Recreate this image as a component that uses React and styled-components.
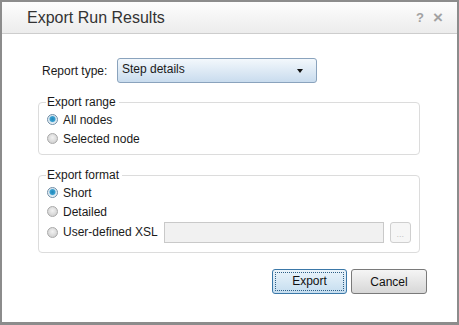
import React from "react";
import styled, { createGlobalStyle } from "styled-components";

const GlobalStyle = createGlobalStyle`
  html, body {
    margin: 0;
    padding: 0;
    background: #fff;
  }
  body {
    font-family: "Liberation Sans", Arial, sans-serif;
    font-size: 12px;
    color: #1a1a1a;
  }
`;

const Window = styled.div`
  width: 459px;
  height: 325px;
  box-sizing: border-box;
  border: 2px solid #8c8c8c;
  border-bottom-width: 3px;
  background: #fff;
  display: flex;
  flex-direction: column;
`;

const TitleBar = styled.div`
  height: 31px;
  flex: none;
  display: flex;
  align-items: center;
  padding: 0 14px 0 25px;
  border-bottom: 1px solid #cdcdcd;
  background: linear-gradient(#fdfdfd, #ececec);
`;

const Title = styled.div`
  flex: 1;
  font-size: 16px;
  color: #333;
  padding-top: 1px;
`;

const TitleButton = styled.span`
  color: #a2a2a2;
  font-size: ${(p) => (p.$big ? "17px" : "13px")};
  font-weight: bold;
  margin-left: ${(p) => (p.$big ? "9px" : "0")};
`;

const Body = styled.div`
  flex: 1;
  padding: 24px 37px 0 36px;
  display: flex;
  flex-direction: column;
`;

const FieldRow = styled.div`
  display: flex;
  align-items: center;
  padding-left: 4px;
  height: 25px;
`;

const Label = styled.span`
  width: 75px;
`;

const Select = styled.div`
  width: 200px;
  height: 25px;
  box-sizing: border-box;
  border: 1px solid #8aa3bd;
  border-radius: 3px;
  background: linear-gradient(#f3f8fc, #c9dcee);
  display: flex;
  align-items: center;
  justify-content: space-between;
  padding: 0 13px 3px 4px;
`;

const Arrow = styled.span`
  width: 0;
  height: 0;
  margin-top: 4px;
  border-left: 3.5px solid transparent;
  border-right: 3.5px solid transparent;
  border-top: 4px solid #111;
`;

const Group = styled.fieldset`
  margin: ${(p) => p.$top}px 0 0;
  padding: 1px 8px ${(p) => p.$bottom}px 8px;
  border: 1px solid #dcdcdc;
  border-radius: 4px;
  min-width: 0;
`;

const Legend = styled.legend`
  padding: 0 3px 0 1px;
  margin-left: -1px;
  line-height: 14px;
  color: #1a1a1a;
`;

const RadioRow = styled.label`
  display: flex;
  align-items: center;
  height: ${(p) => p.$h || 19}px;
  gap: 5px;
  white-space: nowrap;
`;

const RadioDot = styled.span`
  width: 11px;
  height: 11px;
  box-sizing: border-box;
  border-radius: 50%;
  border: 1px solid ${(p) => (p.$on ? "#6f8da6" : "#a9a9a9")};
  background: ${(p) =>
    p.$on
      ? "radial-gradient(circle at 50% 45%, #1f86b8 0, #3aa0d0 2.5px, #d6e6f0 3.5px, #f4f8fb 5px)"
      : "radial-gradient(circle at 50% 40%, #f2f2f2 0, #d4d4d4 5px)"};
  flex: none;
`;

const TextBox = styled.div`
  width: 220px;
  height: 21px;
  box-sizing: border-box;
  margin-left: 1px;
  border: 1px solid #c9c9c9;
  background: #f1f1f1;
  flex: none;
`;

const BrowseButton = styled.div`
  width: 21px;
  height: 21px;
  box-sizing: border-box;
  margin-left: 1px;
  border: 1px solid #cfcfcf;
  border-radius: 3px;
  background: #f6f6f6;
  color: #c4c4c4;
  font-size: 9px;
  display: flex;
  align-items: flex-end;
  justify-content: center;
  padding-bottom: 4px;
  line-height: 8px;
  flex: none;
`;

const Footer = styled.div`
  display: flex;
  justify-content: flex-end;
  gap: 4px;
  margin-top: 16px;
  margin-right: -7px;
`;

const Button = styled.div`
  width: ${(p) => p.$w}px;
  height: 25px;
  box-sizing: border-box;
  border-radius: 3px;
  border: 1px solid ${(p) => (p.$primary ? "#3b78a8" : "#7a7a7a")};
  background: ${(p) =>
    p.$primary
      ? "linear-gradient(#eaf4fb, #c5ddef)"
      : "linear-gradient(#f5f5f5, #d7d7d7)"};
  display: flex;
  align-items: center;
  justify-content: center;
  padding: 2px;
  font-size: 12px;
  color: #111;
`;

const FocusRing = styled.span`
  flex: 1;
  align-self: stretch;
  display: flex;
  align-items: center;
  justify-content: center;
  border: 1px dotted #2d5f86;
  border-radius: 1px;
  padding-bottom: 1px;
`;

const Radio = ({ on, children, h }) => (
  <RadioRow $h={h}>
    <RadioDot $on={on} />
    {children}
  </RadioRow>
);

export default function App() {
  return (
    <>
      <GlobalStyle />
      <Window>
        <TitleBar>
          <Title>Export Run Results</Title>
          <TitleButton>?</TitleButton>
          <TitleButton $big>×</TitleButton>
        </TitleBar>
        <Body>
          <FieldRow>
            <Label>Report type:</Label>
            <Select>
              <span>Step details</span>
              <Arrow />
            </Select>
          </FieldRow>

          <Group $top={12} $bottom={6}>
            <Legend>Export range</Legend>
            <Radio on>All nodes</Radio>
            <Radio>Selected node</Radio>
          </Group>

          <Group $top={13} $bottom={9}>
            <Legend>Export format</Legend>
            <Radio on>Short</Radio>
            <Radio>Detailed</Radio>
            <Radio h={22}>
              User-defined XSL
              <TextBox />
              <BrowseButton>...</BrowseButton>
            </Radio>
          </Group>

          <Footer>
            <Button $primary $w={75}>
              <FocusRing>Export</FocusRing>
            </Button>
            <Button $w={76}>Cancel</Button>
          </Footer>
        </Body>
      </Window>
    </>
  );
}
